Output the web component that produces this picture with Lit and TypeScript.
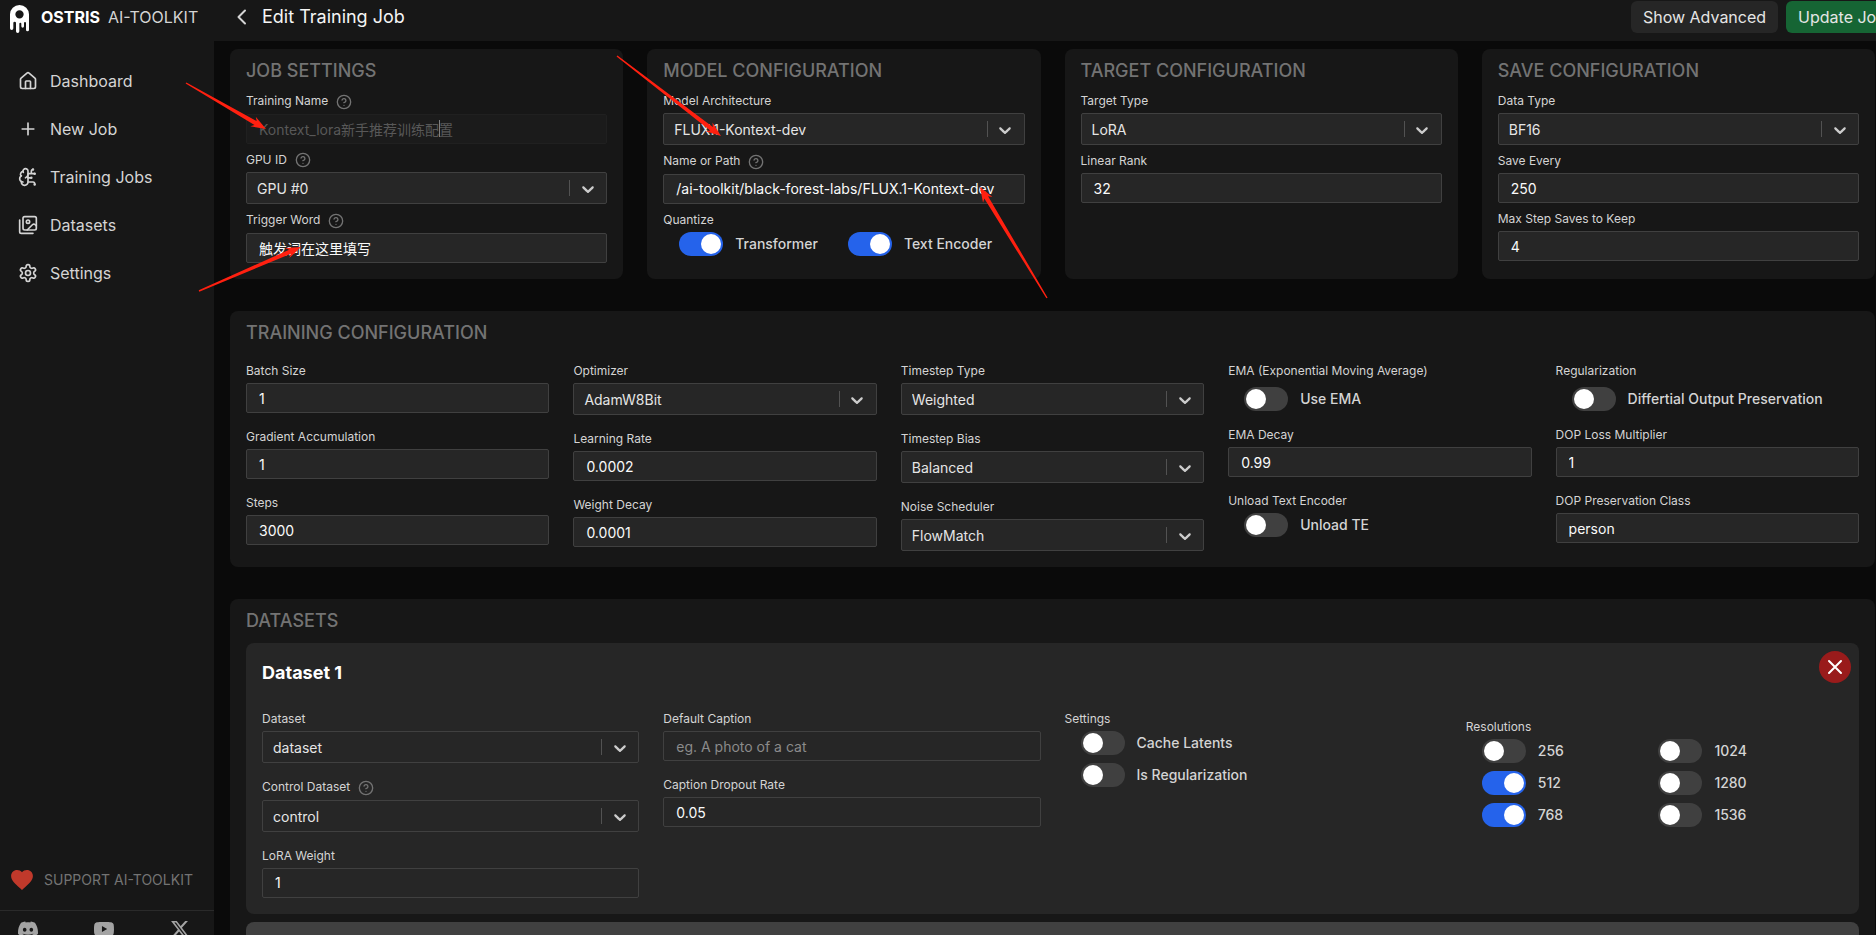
import { LitElement, html, svg, css, nothing, TemplateResult } from "lit";
import { customElement } from "lit/decorators.js";

type Field =
  | { kind: "text"; label: string; value?: string; placeholder?: string; help?: boolean; disabled?: boolean }
  | { kind: "select"; label: string; value: string; help?: boolean }
  | { kind: "toggles"; label: string; items: [string, boolean][]; columns?: number; roomy?: boolean };

const SETTINGS_CARDS: { title: string; fields: Field[] }[] = [
  {
    title: "Job Settings",
    fields: [
      { kind: "text", label: "Training Name", value: "Kontext_lora新手推荐训练配置", help: true, disabled: true },
      { kind: "select", label: "GPU ID", value: "GPU #0", help: true },
      { kind: "text", label: "Trigger Word", value: "触发词在这里填写", help: true },
    ],
  },
  {
    title: "Model Configuration",
    fields: [
      { kind: "select", label: "Model Architecture", value: "FLUX.1-Kontext-dev" },
      { kind: "text", label: "Name or Path", value: "/ai-toolkit/black-forest-labs/FLUX.1-Kontext-dev", help: true },
      { kind: "toggles", label: "Quantize", items: [["Transformer", true], ["Text Encoder", true]], columns: 2 },
    ],
  },
  {
    title: "Target Configuration",
    fields: [
      { kind: "select", label: "Target Type", value: "LoRA" },
      { kind: "text", label: "Linear Rank", value: "32" },
    ],
  },
  {
    title: "Save Configuration",
    fields: [
      { kind: "select", label: "Data Type", value: "BF16" },
      { kind: "text", label: "Save Every", value: "250" },
      { kind: "text", label: "Max Step Saves to Keep", value: "4" },
    ],
  },
];

const TRAINING_COLUMNS: Field[][] = [
  [
    { kind: "text", label: "Batch Size", value: "1" },
    { kind: "text", label: "Gradient Accumulation", value: "1" },
    { kind: "text", label: "Steps", value: "3000" },
  ],
  [
    { kind: "select", label: "Optimizer", value: "AdamW8Bit" },
    { kind: "text", label: "Learning Rate", value: "0.0002" },
    { kind: "text", label: "Weight Decay", value: "0.0001" },
  ],
  [
    { kind: "select", label: "Timestep Type", value: "Weighted" },
    { kind: "select", label: "Timestep Bias", value: "Balanced" },
    { kind: "select", label: "Noise Scheduler", value: "FlowMatch" },
  ],
  [
    { kind: "toggles", label: "EMA (Exponential Moving Average)", items: [["Use EMA", false]], roomy: true },
    { kind: "text", label: "EMA Decay", value: "0.99" },
    { kind: "toggles", label: "Unload Text Encoder", items: [["Unload TE", false]] },
  ],
  [
    { kind: "toggles", label: "Regularization", items: [["Differtial Output Preservation", false]], roomy: true },
    { kind: "text", label: "DOP Loss Multiplier", value: "1" },
    { kind: "text", label: "DOP Preservation Class", value: "person" },
  ],
];

const DATASET_COLUMNS: Field[][] = [
  [
    { kind: "select", label: "Dataset", value: "dataset" },
    { kind: "select", label: "Control Dataset", value: "control", help: true },
    { kind: "text", label: "LoRA Weight", value: "1" },
  ],
  [
    { kind: "text", label: "Default Caption", placeholder: "eg. A photo of a cat" },
    { kind: "text", label: "Caption Dropout Rate", value: "0.05" },
  ],
  [{ kind: "toggles", label: "Settings", items: [["Cache Latents", false], ["Is Regularization", false]] }],
  [
    {
      kind: "toggles",
      label: "Resolutions",
      columns: 2,
      items: [["256", false], ["1024", false], ["512", true], ["1280", false], ["768", true], ["1536", false]],
    },
  ],
];

const NAV: { label: string; icon: TemplateResult }[] = [
  {
    label: "Dashboard",
    icon: svg`<path d="M15 21v-8a1 1 0 0 0-1-1h-4a1 1 0 0 0-1 1v8"/><path d="M3 10a2 2 0 0 1 .709-1.528l7-5.999a2 2 0 0 1 2.582 0l7 5.999A2 2 0 0 1 21 10v9a2 2 0 0 1-2 2H5a2 2 0 0 1-2-2z"/>`,
  },
  { label: "New Job", icon: svg`<path d="M5 12h14M12 5v14"/>` },
  {
    label: "Training Jobs",
    icon: svg`<path d="M12 5a3 3 0 1 0-5.997.125 4 4 0 0 0-2.526 5.77 4 4 0 0 0 .556 6.588A4 4 0 1 0 12 18Z"/><path d="M9 13a4.5 4.5 0 0 0 3-4M6.003 5.125A3 3 0 0 0 6.401 6.5M3.477 10.896a4 4 0 0 1 .585-.396M6 18a4 4 0 0 1-1.967-.516M12 13h4M12 18h6a2 2 0 0 1 2 2v1M12 8h8M16 8V5a2 2 0 0 1 2-2"/><circle cx="16" cy="13" r=".5"/><circle cx="18" cy="3" r=".5"/><circle cx="20" cy="21" r=".5"/><circle cx="20" cy="8" r=".5"/>`,
  },
  {
    label: "Datasets",
    icon: svg`<path d="M18 22H4a2 2 0 0 1-2-2V6"/><path d="m22 13-1.296-1.296a2.41 2.41 0 0 0-3.408 0L11 18"/><circle cx="12" cy="8" r="2"/><rect width="16" height="16" x="6" y="2" rx="2"/>`,
  },
  {
    label: "Settings",
    icon: svg`<path d="M12.22 2h-.44a2 2 0 0 0-2 2v.18a2 2 0 0 1-1 1.73l-.43.25a2 2 0 0 1-2 0l-.15-.08a2 2 0 0 0-2.73.73l-.22.38a2 2 0 0 0 .73 2.73l.15.1a2 2 0 0 1 1 1.72v.51a2 2 0 0 1-1 1.74l-.15.09a2 2 0 0 0-.73 2.73l.22.38a2 2 0 0 0 2.73.73l.15-.08a2 2 0 0 1 2 0l.43.25a2 2 0 0 1 1 1.73V20a2 2 0 0 0 2 2h.44a2 2 0 0 0 2-2v-.18a2 2 0 0 1 1-1.73l.43-.25a2 2 0 0 1 2 0l.15.08a2 2 0 0 0 2.73-.73l.22-.39a2 2 0 0 0-.73-2.73l-.15-.08a2 2 0 0 1-1-1.74v-.5a2 2 0 0 1 1-1.74l.15-.09a2 2 0 0 0 .73-2.73l-.22-.38a2 2 0 0 0-2.73-.73l-.15.08a2 2 0 0 1-2 0l-.43-.25a2 2 0 0 1-1-1.73V4a2 2 0 0 0-2-2z"/><circle cx="12" cy="12" r="3"/>`,
  },
];

const SOCIAL: { label: string; path: string }[] = [
  {
    label: "Discord",
    path: "M20.317 4.3698a19.7913 19.7913 0 00-4.8851-1.5152.0741.0741 0 00-.0785.0371c-.211.3753-.4447.8648-.6083 1.2495-1.8447-.2762-3.68-.2762-5.4868 0-.1636-.3933-.4058-.8742-.6177-1.2495a.077.077 0 00-.0785-.037 19.7363 19.7363 0 00-4.8852 1.515.0699.0699 0 00-.0321.0277C.5334 9.0458-.319 13.5799.0992 18.0578a.0824.0824 0 00.0312.0561c2.0528 1.5076 4.0413 2.4228 5.9929 3.0294a.0777.0777 0 00.0842-.0276c.4616-.6304.8731-1.2952 1.226-1.9942a.076.076 0 00-.0416-.1057c-.6528-.2476-1.2743-.5495-1.8722-.8923a.077.077 0 01-.0076-.1277c.1258-.0943.2517-.1923.3718-.2914a.0743.0743 0 01.0776-.0105c3.9278 1.7933 8.18 1.7933 12.0614 0a.0739.0739 0 01.0785.0095c.1202.099.246.1981.3728.2924a.077.077 0 01-.0066.1276 12.2986 12.2986 0 01-1.873.8914.0766.0766 0 00-.0407.1067c.3604.698.7719 1.3628 1.225 1.9932a.076.076 0 00.0842.0286c1.961-.6067 3.9495-1.5219 6.0023-3.0294a.077.077 0 00.0313-.0552c.5004-5.177-.8382-9.6739-3.5485-13.6604a.061.061 0 00-.0312-.0286zM8.02 15.3312c-1.1825 0-2.1569-1.0857-2.1569-2.419 0-1.3332.9555-2.4189 2.157-2.4189 1.2108 0 2.1757 1.0952 2.1568 2.419 0 1.3332-.9555 2.4189-2.1569 2.4189zm7.9748 0c-1.1825 0-2.1569-1.0857-2.1569-2.419 0-1.3332.9554-2.4189 2.1569-2.4189 1.2108 0 2.1757 1.0952 2.1568 2.419 0 1.3332-.946 2.4189-2.1568 2.4189Z",
  },
  {
    label: "YouTube",
    path: "M23.498 6.186a3.016 3.016 0 0 0-2.122-2.136C19.505 3.545 12 3.545 12 3.545s-7.505 0-9.377.505A3.017 3.017 0 0 0 .502 6.186C0 8.07 0 12 0 12s0 3.93.502 5.814a3.016 3.016 0 0 0 2.122 2.136c1.871.505 9.376.505 9.376.505s7.505 0 9.377-.505a3.015 3.015 0 0 0 2.122-2.136C24 15.93 24 12 24 12s0-3.93-.502-5.814zM9.545 15.568V8.432L15.818 12l-6.273 3.568z",
  },
  {
    label: "X",
    path: "M18.244 2.25h3.308l-7.227 8.26 8.502 11.24H16.17l-5.214-6.817L4.99 21.75H1.68l7.73-8.835L1.254 2.25H8.08l4.713 6.231zm-1.161 17.52h1.833L7.084 4.126H5.117z",
  },
];

// Callout arrows: tail x, tail y, tip x, tip y.
const ARROWS: [number, number, number, number][] = [
  [186, 83, 266, 129],
  [199, 291, 301, 247],
  [617, 56, 721, 136],
  [1047, 298, 980, 187],
];

@customElement("app-root")
export class AppRoot extends LitElement {
  static styles = css`
    :host {
      display: block;
      position: relative;
      height: 100vh;
      overflow: hidden;
      background: #0a0a0a;
      color: #d4d4d4;
      font-family: Inter, "Noto Sans CJK SC", sans-serif;
      font-size: 14px;
      line-height: 20px;
    }
    * {
      box-sizing: border-box;
    }
    h1, h2, h3, fieldset, ul {
      margin: 0;
      padding: 0;
      border: 0;
      min-width: 0;
      font-weight: inherit;
      list-style: none;
    }
    a {
      color: inherit;
      text-decoration: none;
    }
    button, input, select {
      font: inherit;
      color: inherit;
      margin: 0;
    }
    button {
      border: 0;
      cursor: pointer;
    }
    svg {
      display: block;
      flex: none;
    }
    .line {
      fill: none;
      stroke: currentColor;
      stroke-width: 2;
      stroke-linecap: round;
      stroke-linejoin: round;
    }
    .shell {
      display: flex;
      align-items: flex-start;
    }

    .sidebar {
      flex: none;
      width: 214px;
      height: calc(100vh + 20px);
      display: flex;
      flex-direction: column;
      background: #171717;
    }
    .brand {
      display: flex;
      align-items: center;
      gap: 12px;
      padding: 5px 10px 0;
      font-size: 16px;
      line-height: 24px;
    }
    .brand-name {
      display: flex;
      gap: 8px;
      padding-bottom: 4px;
    }
    .brand-name b {
      color: #fff;
      font-weight: 700;
    }
    .nav {
      flex: 1;
      padding-top: 28px;
      display: flex;
      flex-direction: column;
      gap: 8px;
    }
    .nav a {
      display: flex;
      align-items: center;
      gap: 12px;
      padding: 8px 18px;
      font-size: 16px;
      line-height: 24px;
    }
    .support {
      display: flex;
      align-items: center;
      gap: 11px;
      padding: 0 11px 20px;
      color: #737373;
    }
    .support svg {
      fill: #c0392b;
    }
    .social {
      display: flex;
      justify-content: space-between;
      padding: 8px 24px 16px 18px;
      border-top: 1px solid #2a2a2a;
      color: #a3a3a3;
    }
    .social svg {
      fill: currentColor;
    }

    .page {
      flex: 1;
      min-width: 0;
    }
    .topbar {
      display: flex;
      align-items: center;
      gap: 8px;
      margin-right: -30px;
      padding: 1px 8px 8px 16px;
      background: #171717;
    }
    .back {
      display: flex;
      padding: 0;
      background: none;
    }
    .topbar h1 {
      flex: 1;
      padding-bottom: 1px;
      color: #f5f5f5;
      font-size: 18px;
      line-height: 28px;
    }
    .action {
      flex: none;
      padding: 4px 12px;
      border-radius: 6px;
      background: #262626;
      color: #e5e5e5;
      font-size: 16px;
      line-height: 24px;
    }
    .primary {
      background: #166534;
    }

    .content {
      display: flex;
      flex-direction: column;
      gap: 32px;
      margin-right: -15px;
      padding: 8px 16px;
    }
    .cards {
      display: grid;
      grid-template-columns: repeat(4, minmax(0, 1fr));
      gap: 24px;
    }
    .card {
      padding: 8px 16px 16px;
      border-radius: 8px;
      background: #171717;
    }
    .card-title {
      margin-bottom: 8px;
      color: #737373;
      font-size: 18px;
      font-weight: 500;
      line-height: 28px;
      text-transform: uppercase;
    }
    .columns {
      display: grid;
      gap: 24px;
      padding-top: 8px;
    }
    .five {
      grid-template-columns: repeat(5, minmax(0, 1fr));
    }
    .four {
      grid-template-columns: repeat(4, minmax(0, 1fr));
    }
    .stack {
      display: flex;
      flex-direction: column;
      gap: 8px;
    }
    .columns .stack {
      gap: 16px;
    }
    .caption {
      display: block;
      padding: 0;
      margin-bottom: 4px;
      font-size: 12px;
      line-height: 16px;
    }
    .help {
      display: inline-block;
      margin-left: 8px;
      vertical-align: middle;
      color: #737373;
    }
    .text {
      display: block;
      width: 100%;
      height: 30px;
      padding: 0 12px;
      border: 1px solid #404040;
      border-radius: 2px;
      background: #262626;
      color: #fafafa;
      outline: none;
    }
    .text::placeholder {
      color: #8b8b8b;
      opacity: 1;
    }
    .text:disabled {
      border-color: #202020;
      background: #1b1b1b;
      color: #585858;
    }
    .picker {
      display: grid;
      grid-template-columns: minmax(0, 1fr) 38px;
      align-items: center;
    }
    .picker select {
      grid-area: 1 / 1 / 2 / 3;
      width: 100%;
      height: 32px;
      padding: 2px 40px 0 10px;
      border: 1px solid #404040;
      border-radius: 2px;
      background: #262626;
      color: #e5e5e5;
      appearance: none;
      outline: none;
    }
    .marker {
      grid-area: 1 / 2 / 2 / 3;
      display: flex;
      justify-content: center;
      align-items: center;
      height: 16px;
      padding: 2px 2px 0 0;
      border-left: 1px solid #525252;
      pointer-events: none;
    }
    .marker svg {
      fill: #cccccc;
    }
    .toggles {
      display: grid;
      gap: 8px;
      padding: 0 16px;
    }
    .two {
      grid-template-columns: repeat(2, minmax(0, 1fr));
    }
    .roomy {
      padding-top: 4px;
    }
    .late {
      padding-top: 8px;
    }
    .toggle {
      display: flex;
      align-items: center;
      gap: 12px;
      height: 24px;
      font-weight: 500;
      white-space: nowrap;
    }
    .toggle input {
      flex: none;
      display: flex;
      width: 44px;
      height: 24px;
      padding: 2px;
      border-radius: 12px;
      background: #404040;
      appearance: none;
    }
    .toggle input::before {
      content: "";
      width: 20px;
      height: 20px;
      border-radius: 50%;
      background: #fff;
    }
    .toggle input:checked {
      justify-content: flex-end;
      background: #2563eb;
    }

    .dataset {
      position: relative;
      padding: 16px;
      border-radius: 8px;
      background: #262626;
    }
    .dataset h3 {
      margin-bottom: 16px;
      color: #fff;
      font-size: 18px;
      font-weight: 700;
      line-height: 28px;
    }
    .remove {
      position: absolute;
      top: 8px;
      right: 8px;
      display: grid;
      place-items: center;
      width: 32px;
      height: 32px;
      padding: 0;
      border-radius: 50%;
      background: #991b1b;
      color: #fff;
    }
    .add {
      display: block;
      width: 100%;
      margin-top: 8px;
      padding: 16px;
      border-radius: 8px;
      background: #404040;
    }
    .callouts {
      position: absolute;
      top: 0;
      left: 0;
      width: 100%;
      height: 100%;
      pointer-events: none;
      fill: #ff2010;
    }
    .callouts line {
      stroke: #808080;
    }
  `;

  private idFor(label: string) {
    return label.toLowerCase().replace(/[^a-z0-9]+/g, "-");
  }

  private help() {
    return html`<svg class="help line" width="16" height="16" viewBox="0 0 24 24" aria-hidden="true">
      <circle cx="12" cy="12" r="10"/><path d="M9.09 9a3 3 0 0 1 5.83 1c0 2-3 3-3 3M12 17h.01"/></svg>`;
  }

  private field(f: Field) {
    const id = this.idFor(f.label);
    if (f.kind === "toggles") {
      return html`<fieldset class=${f.label === "Resolutions" ? "late" : ""} aria-labelledby=${id}>
        <div class="caption" id=${id}>${f.label}</div>
        <div class="toggles ${f.columns === 2 ? "two" : ""} ${f.roomy ? "roomy" : ""}">
          ${f.items.map(([name, on]) => html`<label class="toggle"><input type="checkbox" .checked=${on}>${name}</label>`)}
        </div>
      </fieldset>`;
    }
    return html`<div>
      <label class="caption" for=${id}>${f.label}${f.help ? this.help() : nothing}</label>
      ${f.kind === "text"
        ? html`<input class="text" type="text" id=${id} .value=${f.value ?? ""} placeholder=${f.placeholder ?? ""} ?disabled=${f.disabled}>`
        : html`<div class="picker">
            <select id=${id}><option selected>${f.value}</option></select>
            <span class="marker"><svg width="20" height="20" viewBox="0 0 20 20" aria-hidden="true"><path d="M4.516 7.548c0.436-0.446 1.043-0.481 1.576 0l3.908 3.747 3.908-3.747c0.533-0.481 1.141-0.446 1.574 0 0.436 0.445 0.408 1.197 0 1.615-0.406 0.418-4.695 4.502-4.695 4.502-0.217 0.223-0.502 0.335-0.787 0.335s-0.57-0.112-0.789-0.335c0 0-4.287-4.084-4.695-4.502s-0.436-1.17 0-1.615z"/></svg></span>
          </div>`}
    </div>`;
  }

  private stack(fields: Field[]) {
    return html`<div class="stack">${fields.map((f) => this.field(f))}</div>`;
  }

  private arrow([x1, y1, x2, y2]: [number, number, number, number]) {
    const length = Math.hypot(x2 - x1, y2 - y1);
    const angle = (Math.atan2(y2 - y1, x2 - x1) * 180) / Math.PI;
    const neck = length - 12;
    return svg`<path transform="translate(${x1} ${y1}) rotate(${angle})"
      d="M0 -0.7 L${neck} -2.2 L${neck - 3} -5.5 L${length} 0 L${neck - 3} 5.5 L${neck} 2.2 L0 0.7Z"/>`;
  }

  render() {
    return html`
      <div class="shell">
        <aside class="sidebar">
          <div class="brand">
            <svg width="19" height="28" viewBox="0 0 57 84" aria-hidden="true">
              <path fill="#fff" fill-rule="evenodd" d="M0 28a28.500 28 0 0 1 57 0V74a4.500 4.500 0 0 1-9 0V54a3 3 0 0 0-6 0V64a4 4 0 0 1-8 0V56a3 3 0 0 0-6 0V79a5 5 0 0 1-10 0V54a4 4 0 0 0-8 0V70a5 5 0 0 1-10 0zM16 28a12.500 12.500 0 1 0 25 0a12.500 12.500 0 1 0-25 0z"/>
            </svg>
            <div class="brand-name"><b>OSTRIS</b><span>AI-TOOLKIT</span></div>
          </div>
          <nav class="nav">
            ${NAV.map((n) => html`<a href="#"><svg class="line" width="20" height="20" viewBox="0 0 24 24" aria-hidden="true">${n.icon}</svg>${n.label}</a>`)}
          </nav>
          <a class="support" href="#">
            <svg width="22" height="20" viewBox="2 3 20 18.350" aria-hidden="true"><path d="M12 21.35l-1.45-1.32C5.4 15.36 2 12.28 2 8.5 2 5.42 4.42 3 7.5 3c1.74 0 3.41.81 4.5 2.09C13.09 3.81 14.76 3 16.5 3 19.58 3 22 5.42 22 8.5c0 3.78-3.4 6.86-8.55 11.54L12 21.35z"/></svg>
            SUPPORT AI-TOOLKIT
          </a>
          <div class="social">
            ${SOCIAL.map((s) => html`<a href="#" aria-label=${s.label}><svg width="20" height="20" viewBox="0 0 24 24" aria-hidden="true"><path d=${s.path}/></svg></a>`)}
          </div>
        </aside>

        <main class="page">
          <header class="topbar">
            <button class="back" aria-label="Back">
              <svg class="line" width="24" height="20" viewBox="0 0 24 20" aria-hidden="true"><path d="M15 3.500 8.500 10 15 16.500"/></svg>
            </button>
            <h1>Edit Training Job</h1>
            <button class="action">Show Advanced</button>
            <button class="action primary">Update Job</button>
          </header>

          <div class="content">
            <div class="cards">
              ${SETTINGS_CARDS.map((c) => html`<section class="card"><h2 class="card-title">${c.title}</h2>${this.stack(c.fields)}</section>`)}
            </div>
            <section class="card">
              <h2 class="card-title">Training Configuration</h2>
              <div class="columns five">${TRAINING_COLUMNS.map((c) => this.stack(c))}</div>
            </section>
            <section class="card">
              <h2 class="card-title">Datasets</h2>
              <div class="dataset">
                <button class="remove" aria-label="Remove dataset">
                  <svg class="line" width="16" height="16" viewBox="0 0 16 16" aria-hidden="true"><path d="M2 2l12 12M14 2 2 14"/></svg>
                </button>
                <h3>Dataset 1</h3>
                <div class="columns four">${DATASET_COLUMNS.map((c) => this.stack(c))}</div>
              </div>
              <button class="add" aria-label="Add Dataset">+</button>
            </section>
          </div>
        </main>
      </div>
      <svg class="callouts" aria-hidden="true">
        <line x1="439.500" y1="120" x2="439.500" y2="137"/>
        ${ARROWS.map((a) => this.arrow(a))}
      </svg>
    `;
  }
}
